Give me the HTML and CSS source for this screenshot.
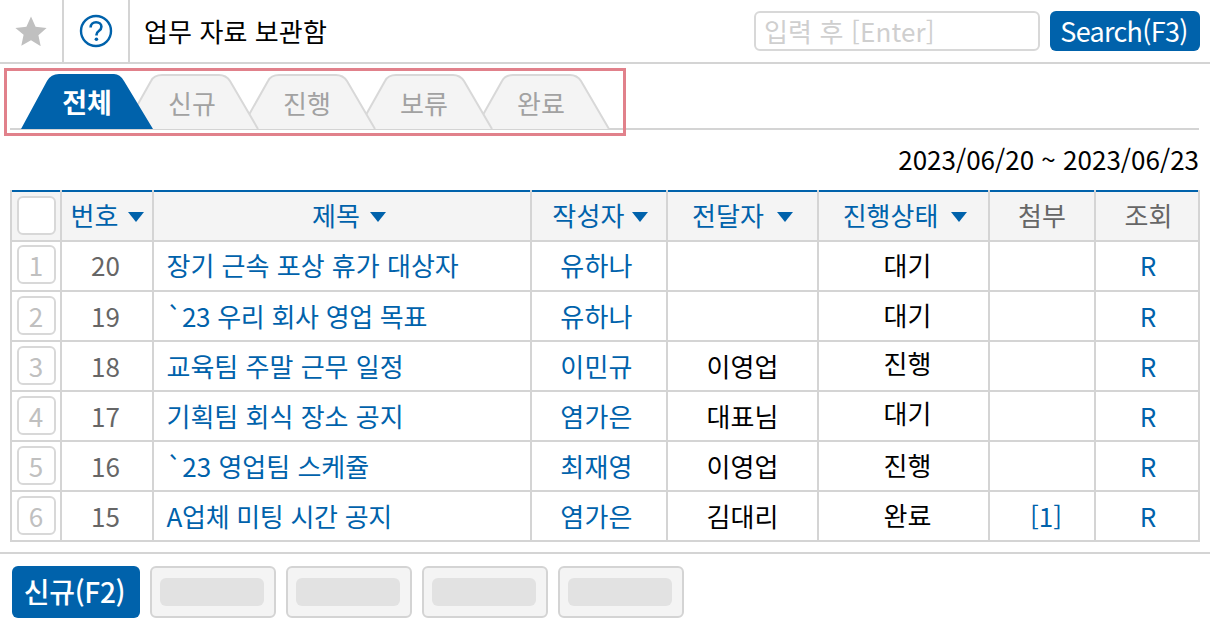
FILE: index.html
```html
<!DOCTYPE html>
<html lang="ko">
<head>
<meta charset="utf-8">
<title>업무 자료 보관함</title>
<link rel="stylesheet" href="styles.css">
</head>
<body>
<header class="top">
  <div class="cell star">
    <svg width="32" height="30" viewBox="0 0 32 30"><path d="M16 0.5l4.600 10.200 11 1.200-8.200 7.400 2.300 10.900L16 24.200l-9.700 5.500 2.300-10.900L.4 11.900l11-1.200z" fill="#c0c0c0"/></svg>
  </div>
  <div class="cell help">
    <svg width="34" height="34" viewBox="0 0 34 34"><circle cx="17" cy="17" r="15" fill="none" stroke="#0062ab" stroke-width="2.4"/><path d="M11.600 13.400c0-3.200 2.400-5.200 5.500-5.200 3.100 0 5.300 1.900 5.300 4.600 0 2-1 3.100-2.600 4.200-1.600 1.100-2.300 2-2.300 3.800v.7" fill="none" stroke="#0062ab" stroke-width="2.6"/><circle cx="17.400" cy="25.200" r="1.800" fill="#0062ab"/></svg>
  </div>
  <h1 class="title">업무 자료 보관함</h1>
  <div class="search">
    <div class="input">입력 후 [Enter]</div>
    <div class="btn-search">Search(F3)</div>
  </div>
</header>

<nav class="tabs">
  <div class="tab active"><svg class="shape" width="132" height="55" viewBox="0 0 132 55"><path d="M0 55L26 7Q30 0 38 0H93Q99 0 103 7L132 55Z" fill="#0062ab"/></svg><span>전체</span></div>
  <div class="tab z4"><svg class="shape" width="136" height="55" viewBox="0 0 136 55"><path d="M1 55L28 7Q31 1 39 1H96Q103 1 107 7L135 55" fill="#f4f4f4" stroke="#d8d8d8" stroke-width="2"/></svg><span>신규</span></div>
  <div class="tab z3"><svg class="shape" width="136" height="55" viewBox="0 0 136 55"><path d="M1 55L28 7Q31 1 39 1H96Q103 1 107 7L135 55" fill="#f4f4f4" stroke="#d8d8d8" stroke-width="2"/></svg><span>진행</span></div>
  <div class="tab z2"><svg class="shape" width="136" height="55" viewBox="0 0 136 55"><path d="M1 55L28 7Q31 1 39 1H96Q103 1 107 7L135 55" fill="#f4f4f4" stroke="#d8d8d8" stroke-width="2"/></svg><span>보류</span></div>
  <div class="tab z1"><svg class="shape" width="136" height="55" viewBox="0 0 136 55"><path d="M1 55L28 7Q31 1 39 1H96Q103 1 107 7L135 55" fill="#f4f4f4" stroke="#d8d8d8" stroke-width="2"/></svg><span>완료</span></div>
</nav>
<div class="highlight"></div>

<div class="date">2023/06/20 ~ 2023/06/23</div>

<table class="grid">
  <colgroup>
    <col class="c0"><col class="c1"><col class="c2"><col class="c3"><col class="c4"><col class="c5"><col class="c6"><col class="c7">
  </colgroup>
  <thead>
    <tr>
      <th class="check-head"><span class="num blank"></span></th>
      <th class="sort no-head">번호<i class="arrow"></i></th>
      <th class="sort subject-head">제목<i class="arrow"></i></th>
      <th class="sort writer-head">작성자<i class="arrow tight"></i></th>
      <th class="sort">전달자<i class="arrow wide"></i></th>
      <th class="sort status-head">진행상태<i class="arrow wide"></i></th>
      <th>첨부</th>
      <th class="view-head">조회</th>
    </tr>
  </thead>
  <tbody>
    <tr><td><span class="num">1</span></td><td class="no">20</td><td class="subject">장기 근속 포상 휴가 대상자</td><td class="link writer">유하나</td><td></td><td class="status">대기</td><td></td><td class="link view">R</td></tr>
    <tr><td><span class="num">2</span></td><td class="no">19</td><td class="subject snug">`23 우리 회사 영업 목표</td><td class="link writer">유하나</td><td></td><td class="status">대기</td><td></td><td class="link view">R</td></tr>
    <tr><td><span class="num">3</span></td><td class="no">18</td><td class="subject">교육팀 주말 근무 일정</td><td class="link writer">이민규</td><td>이영업</td><td class="status raised">진행</td><td></td><td class="link view">R</td></tr>
    <tr><td><span class="num">4</span></td><td class="no">17</td><td class="subject">기획팀 회식 장소 공지</td><td class="link writer">염가은</td><td>대표님</td><td class="status raised">대기</td><td></td><td class="link view">R</td></tr>
    <tr><td><span class="num">5</span></td><td class="no">16</td><td class="subject">`23 영업팀 스케쥴</td><td class="link writer">최재영</td><td>이영업</td><td class="status">진행</td><td></td><td class="link view">R</td></tr>
    <tr><td><span class="num">6</span></td><td class="no">15</td><td class="subject snug">A업체 미팅 시간 공지</td><td class="link writer">염가은</td><td>김대리</td><td class="status">완료</td><td class="link attach">[1]</td><td class="link view">R</td></tr>
  </tbody>
</table>

<footer class="bottom">
  <div class="btn-new">신규(F2)</div>
  <div class="btn-ghost"><span></span></div>
  <div class="btn-ghost"><span></span></div>
  <div class="btn-ghost"><span></span></div>
  <div class="btn-ghost"><span></span></div>
</footer>
</body>
</html>
```
FILE: styles.css
```css
* { box-sizing: border-box; }
html, body { margin: 0; padding: 0; }
body {
  width: 1210px; height: 630px; overflow: hidden; position: relative; background: #fff;
  font-family: "Noto Sans CJK KR", "Noto Sans", sans-serif;
  font-size: 26px; color: #000;
}
.top { display: flex; align-items: center; height: 64px; border-bottom: 2px solid #d4d4d4; }
.cell { height: 62px; display: flex; align-items: center; justify-content: center; border-right: 2px solid #d4d4d4; }
.star { width: 64px; }
.help { width: 66px; }
.title { margin: 0 0 0 14px; font-size: 26px; font-weight: 400; line-height: 62px; flex: 1; letter-spacing: 0.1px; }
.search { display: flex; gap: 10px; margin-right: 10px; }
.input { width: 286px; height: 40px; border: 2px solid #d8d8d8; border-radius: 6px; color: #cfcfcf; line-height: 35px; padding-left: 8px; font-size: 26px; letter-spacing: 0.15px; }
.btn-search { width: 150px; height: 40px; padding-right: 2px; background: #0062ab; color: #fff; border-radius: 6px; text-align: center; line-height: 39px; font-size: 27px; letter-spacing: -0.7px; }

.tabs { display: flex; height: 66px; padding: 10px 0 0 11px; border-bottom: 2px solid #d4d4d4; margin: 0 11px 0 10px; }
.tab { position: relative; width: 117px; height: 55px; flex: none; color: #a2a2a2; text-align: center; line-height: 58px; }
.tab .shape { position: absolute; left: 0; top: 0; display: block; }
.tab span { position: relative; display: block; width: 134px; }
.tab.active { z-index: 5; width: 102px; color: #fff; font-weight: 700; font-size: 27px; line-height: 55px; }
.tab.active span { width: 132px; }
.tab.z4 { z-index: 4; }
.tab.z4 span { width: 138px; }
.tab.z3 { z-index: 3; }
.tab.z2 { z-index: 2; }
.tab.z1 { z-index: 1; }
.highlight { position: absolute; left: 4px; top: 68px; width: 622px; height: 68px; border: 3px solid #e1818b; z-index: 6; }

.date { height: 60px; text-align: right; padding-right: 11px; line-height: 58px; }

.grid { width: 1188px; margin-left: 10px; border-collapse: collapse; table-layout: fixed; border-top: 2px solid #0062ab; }
.c0 { width: 50px; } .c1 { width: 92px; } .c2 { width: 378px; } .c3 { width: 136px; }
.c4 { width: 151px; } .c5 { width: 171px; } .c6 { width: 106px; } .c7 { width: 104px; }
.grid th, .grid td { border: 2px solid #d4d4d4; height: 50px; padding: 0; text-align: center; font-weight: 400; line-height: 44px; }
.grid th { line-height: 42px; padding-bottom: 3px; background: #f4f4f4; color: #666; }
.grid thead tr:first-child th { border-top: 0; }
.grid th.check-head { padding-bottom: 0; }
.grid th.sort { color: #0062ab; }
.grid th.no-head { padding-left: 1px; }
.grid th.subject-head { padding-left: 14px; }
.grid th.writer-head { padding-left: 2px; letter-spacing: 0.2px; }
.grid th.status-head { padding-left: 3px; }
.grid th.view-head { padding-left: 3px; }
.arrow { display: inline-block; width: 0; height: 0; margin-left: 10px; vertical-align: 4px; border-left: 8px solid transparent; border-right: 8px solid transparent; border-top: 10px solid #0062ab; }
.arrow.tight { margin-left: 7px; }
.arrow.wide { margin-left: 13px; }
.grid td.no { color: #666; padding-right: 3px; }
.link, .subject { color: #0062ab; }
.grid td.subject { text-align: left; padding-left: 12.5px; }
.grid td.snug { letter-spacing: -0.3px; }
.grid td.writer { padding-right: 5px; letter-spacing: 0.3px; }
.grid td.status { padding: 0 0 2px 8px; }
.grid td.raised { padding-bottom: 6px; line-height: 40px; }
.grid td.attach { padding-left: 8px; }
.grid td.view { padding-left: 2px; }
.grid tbody tr:first-child td { padding-bottom: 2px; }
.num { display: block; width: 39px; height: 39px; margin: 0 auto 2px; background: #fff; border: 2px solid #d8d8d8; border-radius: 6px; color: #c0c0c0; line-height: 35px; text-align: center; }

.bottom { display: flex; gap: 10px; margin-top: 10px; padding: 12px 12px 0; border-top: 2px solid #d4d4d4; }
.btn-new { width: 128px; height: 52px; padding-right: 3px; background: #0062ab; color: #fff; border-radius: 6px; text-align: center; line-height: 50px; font-size: 28px; letter-spacing: -0.3px; font-weight: 500; }
.btn-ghost { width: 126px; height: 52px; background: #f4f4f4; border: 2px solid #d4d4d4; border-radius: 6px; padding: 10px 10px 10px 8px; }
.btn-ghost span { display: block; height: 28px; background: #e2e2e2; border-radius: 6px; }
```
